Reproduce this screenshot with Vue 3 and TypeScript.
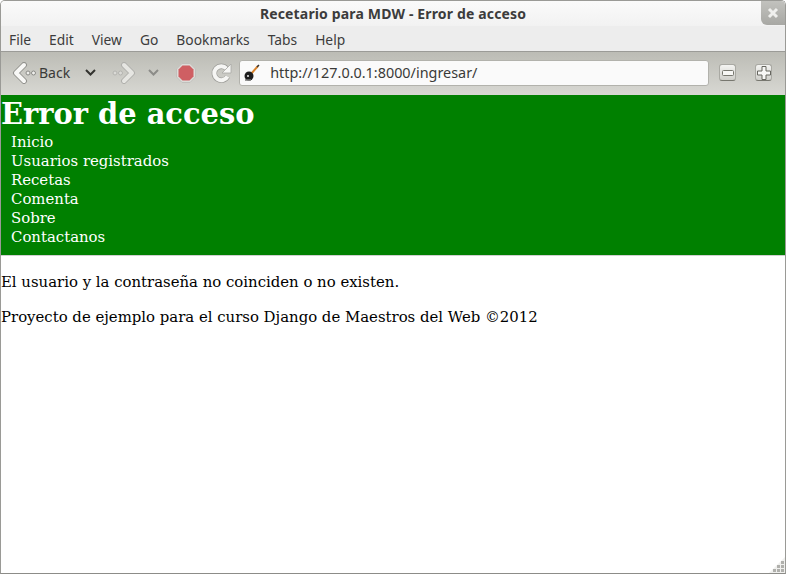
<template>
  <div class="window">
    <div class="titlebar">
      <span class="title">Recetario para MDW - Error de acceso</span>
      <div class="close">
        <svg width="12" height="12" viewBox="0 0 12 12">
          <path d="M2 2 10 10M10 2 2 10" stroke="#f0f0ee" stroke-width="3" />
        </svg>
      </div>
    </div>
    <div class="menubar">
      <span v-for="item in menus" :key="item">{{ item }}</span>
    </div>
    <div class="toolbar">
      <svg class="nav-arrow" width="24" height="22" viewBox="0 0 24 22">
        <path d="M12 3 4 11l8 8" fill="none" stroke="#92928e" stroke-width="6" stroke-linejoin="round" stroke-linecap="round" />
        <path d="M12 3 4 11l8 8" fill="none" stroke="#f8f8f6" stroke-width="4" stroke-linejoin="round" stroke-linecap="round" />
        <circle cx="16" cy="11" r="2" fill="#efefec" stroke="#8a8a86" />
        <circle cx="21.500" cy="11" r="2" fill="#efefec" stroke="#8a8a86" />
      </svg>
      <span class="back-label">Back</span>
      <svg class="chevron" width="11" height="7" viewBox="0 0 11 7">
        <path d="M1 1 5.5 5.5 10 1" fill="none" stroke="#33332f" stroke-width="2" />
      </svg>
      <svg class="nav-arrow forward" width="24" height="22" viewBox="0 0 24 22">
        <circle cx="3" cy="11" r="2" fill="#dadad6" stroke="#b4b4b0" />
        <circle cx="8.500" cy="11" r="2" fill="#dadad6" stroke="#b4b4b0" />
        <path d="M12 3l8 8-8 8" fill="none" stroke="#b0b0ac" stroke-width="6" stroke-linejoin="round" stroke-linecap="round" />
        <path d="M12 3l8 8-8 8" fill="none" stroke="#e6e6e2" stroke-width="4" stroke-linejoin="round" stroke-linecap="round" />
      </svg>
      <svg class="chevron dim" width="11" height="7" viewBox="0 0 11 7">
        <path d="M1 1 5.5 5.5 10 1" fill="none" stroke="#8c8c88" stroke-width="2" />
      </svg>
      <svg class="stop" width="20" height="20" viewBox="0 0 20 20">
        <path d="M6 .5h8l5.500 5.500v8L14 19.500H6L.5 14V6z" fill="#dcdcd8" stroke="#c0c0bc" />
        <path d="M6.500 2.500h7l4 4v7l-4 4h-7l-4-4v-7z" fill="#cf5f63" />
      </svg>
      <svg class="reload" width="22" height="22" viewBox="0 0 22 22">
        <path d="M16.5 14.500a7 7 0 1 1-1-8" fill="none" stroke="#a0a09c" stroke-width="5.400" />
        <path d="M16.5 14.500a7 7 0 1 1-1-8" fill="none" stroke="#f6f6f4" stroke-width="4" />
        <path d="M20 2v9h-9z" fill="#f6f6f4" stroke="#a8a8a4" stroke-width=".8" />
      </svg>
      <div class="urlbar">
        <svg class="favicon" width="18" height="18" viewBox="0 0 18 18">
          <path d="M8 10 15 2" stroke="#d9822b" stroke-width="2" />
          <path d="M14 3 16 1" stroke="#333" stroke-width="1.500" />
          <circle cx="6" cy="12" r="4.500" fill="#1d1d1d" />
          <circle cx="5" cy="12" r="1" fill="#eee" />
          <path d="M2 16h6" stroke="#777" stroke-width="1.500" />
        </svg>
        <span class="url">http://127.0.0.1:8000/ingresar/</span>
      </div>
      <div class="zoom-btn first">
        <svg width="12" height="8" viewBox="0 0 12 8">
          <rect x=".5" y="1.500" width="11" height="5" rx="1" fill="#f7f7f5" stroke="#77776f" />
        </svg>
      </div>
      <div class="zoom-btn">
        <svg width="14" height="14" viewBox="0 0 14 14">
          <path d="M5 .5h4V5h4.500v4H9v4.500H5V9H.5V5H5z" fill="#f7f7f5" stroke="#66665f" />
        </svg>
      </div>
    </div>
    <div class="page">
      <header class="banner">
        <h1>Error de acceso</h1>
        <ul>
          <li v-for="link in links" :key="link">{{ link }}</li>
        </ul>
      </header>
      <p>El usuario y la contraseña no coinciden o no existen.</p>
      <p>Proyecto de ejemplo para el curso Django de Maestros del Web ©2012</p>
    </div>
    <svg class="grip" width="16" height="16" viewBox="0 0 16 16">
      <path d="M16 0V16H0z" fill="#f0f0ee" />
      <rect v-for="(d, i) in gripDots" :key="i" :x="d[0]" :y="d[1]" width="3" height="3" fill="#b0b0ac" />
    </svg>
  </div>
</template>

<script setup lang="ts">
const menus = ['File', 'Edit', 'View', 'Go', 'Bookmarks', 'Tabs', 'Help']
const links = ['Inicio', 'Usuarios registrados', 'Recetas', 'Comenta', 'Sobre', 'Contactanos']
const gripDots: number[][] = [
  [12, 4], [8, 8], [12, 8], [4, 12], [8, 12], [12, 12]
]
</script>

<style>
html, body {
  margin: 0;
  background: #fff;
}
</style>

<style scoped>
.window {
  position: relative;
  width: 786px;
  height: 574px;
  box-sizing: border-box;
  border: 1px solid #9a9a96;
  border-bottom-color: #8c8c88;
  border-radius: 5px 5px 0 0;
  overflow: hidden;
  display: flex;
  flex-direction: column;
  background: #fff;
  font-family: "Noto Sans", sans-serif;
}

.titlebar {
  position: relative;
  height: 25px;
  flex: none;
  display: flex;
  align-items: center;
  justify-content: center;
  background: linear-gradient(#fafafa, #f2f2f2);
}

.title {
  font-size: 14px;
  font-weight: 700;
  color: #3c3c3c;
  letter-spacing: 0.15px;
}

.close {
  position: absolute;
  right: 0;
  top: 0;
  width: 24px;
  height: 24px;
  border-radius: 0 0 0 6px;
  background: linear-gradient(#c2c2be, #a8a8a4);
  display: flex;
  align-items: center;
  justify-content: center;
}

.menubar {
  height: 24px;
  padding: 1px 0 0 8px;
  flex: none;
  display: flex;
  align-items: center;
  gap: 18px;
  font-size: 13.8px;
  color: #3c3c3c;
  background: #ededed;
  border-bottom: 1px solid #9b9b97;
}

.toolbar {
  height: 41px;
  padding-bottom: 2px;
  flex: none;
  display: flex;
  align-items: center;
  background: linear-gradient(#bcbcb5, #d8d8d3);
}

.nav-arrow {
  margin-left: 11px;
  flex: none;
}

.nav-arrow.forward {
  margin-left: 16px;
}

.back-label {
  margin-left: 3px;
  font-size: 14px;
  color: #3a3a38;
}

.chevron {
  margin-left: 15px;
  flex: none;
}

.chevron.dim {
  margin-left: 12px;
}

.stop {
  margin-left: 17px;
  flex: none;
}

.reload {
  margin-left: 15px;
  flex: none;
}

.urlbar {
  margin-left: 6px;
  width: 470px;
  height: 26px;
  flex: none;
  box-sizing: border-box;
  display: flex;
  align-items: center;
  padding-left: 3px;
  border: 1px solid #b2b2ac;
  border-radius: 3px;
  background: #fafafa;
}

.url {
  margin-left: 9px;
  font-size: 14.4px;
  color: #3a3a38;
}

.zoom-btn {
  width: 17px;
  height: 17px;
  flex: none;
  box-sizing: border-box;
  margin-left: 19px;
  display: flex;
  align-items: center;
  justify-content: center;
  border: 1px solid #a9a9a3;
  border-bottom-color: #77776f;
  border-radius: 3px;
  background: linear-gradient(#f4f4f2, #cfcfca);
}

.zoom-btn.first {
  margin-left: 10px;
}

.page {
  flex: 1;
  font-family: "DejaVu Serif", serif;
  font-size: 14.9px;
  color: #000;
}

.banner {
  background: #008000;
  color: #fff;
  padding-bottom: 8px;
  border-bottom: 1px solid #cfcfcf;
}

h1 {
  margin: 0;
  font-size: 28.9px;
  line-height: 38px;
  font-weight: 700;
}

ul {
  list-style: none;
  margin: 0;
  padding: 0 0 0 10px;
}

li {
  line-height: 19px;
}

p {
  margin: 16px 0;
  line-height: 19px;
}

.banner + p {
  margin-top: 17px;
}

.grip {
  position: absolute;
  right: 0;
  bottom: 0;
}
</style>
